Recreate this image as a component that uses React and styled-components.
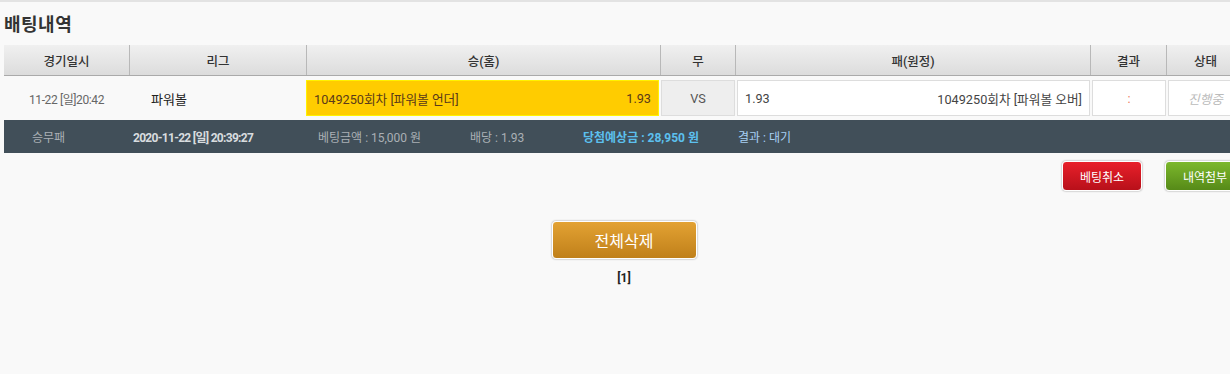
import React from "react";
import styled, { createGlobalStyle } from "styled-components";

const Global = createGlobalStyle`
  html, body { margin: 0; padding: 0; overflow: hidden; }
  body {
    background: #f9f9f9;
    font-family: Roboto, "Noto Sans CJK KR", sans-serif;
    color: #333;
  }
`;

const Page = styled.div`
  width: 1240px;
  padding: 0 0 0 4px;
  border-top: 2px solid #e3e3e3;
`;

const Title = styled.h2`
  margin: 0;
  padding: 10px 0 0;
  height: 33px;
  font-size: 18px;
  font-weight: 700;
  color: #333;
  letter-spacing: 0.5px;
  line-height: 26px;
`;

const cols = "125px 177px 354px 75px 355px 76px 78px";

const Header = styled.div`
  display: grid;
  grid-template-columns: ${cols};
  height: 30px;
  background: linear-gradient(#f0f0f0, #dcdcdc);
  border-bottom: 1px solid #aaa;
`;

const HCell = styled.div`
  display: flex;
  align-items: center;
  justify-content: center;
  font-size: 12.5px;
  font-weight: 500;
  color: #333;
  border-left: ${(p) => (p.$first ? "none" : "1px solid #b8b8b8")};
`;

const Row = styled.div`
  display: grid;
  grid-template-columns: ${cols};
  height: 44px;
  align-items: stretch;
`;

const Cell = styled.div`
  display: flex;
  align-items: center;
  justify-content: ${(p) => p.$justify || "center"};
  padding-left: ${(p) => p.$pl || 0}px;
  font-size: ${(p) => p.$fs || 12}px;
  letter-spacing: ${(p) => p.$ls || 0}px;
  color: ${(p) => p.$color || "#333"};
`;

const Box = styled.div`
  box-sizing: border-box;
  margin: 4px ${(p) => p.$mr || 0}px 4px ${(p) => p.$ml || 0}px;
  flex: 1;
  align-self: stretch;
  display: flex;
  align-items: center;
  justify-content: ${(p) => p.$justify || "space-between"};
  padding: 0 7px;
  font-size: 12.7px;
  color: ${(p) => p.$color || "#333"};
  background: ${(p) => p.$bg || "#fff"};
  border: 1px solid ${(p) => p.$border || "#ddd"};
  font-style: ${(p) => (p.$italic ? "italic" : "normal")};
`;

const InfoBar = styled.div`
  display: flex;
  align-items: center;
  height: 33px;
  padding-left: 28px;
  background: #414f59;
  font-size: 12px;
`;

const Info = styled.span`
  flex-shrink: 0;
  width: ${(p) => (p.$w ? `${p.$w}px` : "auto")};
  color: ${(p) => p.$color || "#aab0b5"};
  font-weight: ${(p) => (p.$bold ? 700 : 400)};
  letter-spacing: ${(p) => p.$ls || 0}px;
`;

const Actions = styled.div`
  display: flex;
  justify-content: flex-end;
  gap: 23px;
  padding: 8px 0 0;
  margin-right: -1px;
`;

const Btn = styled.button`
  box-sizing: border-box;
  width: ${(p) => p.$w || 80}px;
  height: ${(p) => p.$h || 30}px;
  border: 1px solid #fff;
  border-radius: 4px;
  box-shadow: 0 0 2px rgba(0, 0, 0, 0.45);
  background: ${(p) => p.$bg};
  color: #fff;
  font-family: Roboto, "Noto Sans CJK KR", sans-serif;
  font-size: ${(p) => p.$fs || 12}px;
  cursor: pointer;
  padding: 0;
`;

const Center = styled.div`
  display: flex;
  flex-direction: column;
  align-items: center;
  width: 1248px;
  margin-left: -4px;
  padding-top: 30px;
`;

const Pager = styled.div`
  margin-top: 12px;
  font-size: 12px;
  font-weight: 700;
  color: #222;
`;

export default function App() {
  const heads = ["경기일시", "리그", "승(홈)", "무", "패(원정)", "결과", "상태"];
  return (
    <>
      <Global />
      <Page>
        <Title>배팅내역</Title>
        <Header>
          {heads.map((h, i) => (
            <HCell key={h} $first={i === 0}>
              {h}
            </HCell>
          ))}
        </Header>
        <Row>
          <Cell $color="#666" $ls={-0.4}>
            11-22 [일]20:42
          </Cell>
          <Cell $justify="flex-start" $pl={22} $color="#222" $fs={13}>
            파워볼
          </Cell>
          <Cell>
            <Box $bg="#ffcc00" $border="#fff200" $mr={1} $color="#5a3a1a">
              <span>1049250회차 [파워볼 언더]</span>
              <span>1.93</span>
            </Box>
          </Cell>
          <Cell>
            <Box $bg="#eeeeee" $ml={1} $justify="center" $color="#555">
              VS
            </Box>
          </Cell>
          <Cell>
            <Box $ml={2} $color="#444">
              <span>1.93</span>
              <span>1049250회차 [파워볼 오버]</span>
            </Box>
          </Cell>
          <Cell>
            <Box $ml={2} $justify="center" $color="#f08060">
              :
            </Box>
          </Cell>
          <Cell>
            <Box $ml={2} $justify="flex-start" $color="#bbb" $italic>
              <span style={{ paddingLeft: 12 }}>진행중</span>
            </Box>
          </Cell>
        </Row>
        <InfoBar>
          <Info $w={101}>승무패</Info>
          <Info $w={185} $bold $color="#d8dcdf" $ls={-0.7}>
            2020-11-22 [일] 20:39:27
          </Info>
          <Info $w={152}>베팅금액 : 15,000 원</Info>
          <Info $w={113}>배당 : 1.93</Info>
          <Info $w={155} $bold $color="#5cc0ee">
            당첨예상금 : 28,950 원
          </Info>
          <Info $color="#a8d0f4">결과 : 대기</Info>
        </InfoBar>
        <Actions>
          <Btn $bg="linear-gradient(#e8202a, #b8101a)">베팅취소</Btn>
          <Btn $bg="linear-gradient(#7cb82c, #568a18)">내역첨부</Btn>
        </Actions>
        <Center>
          <Btn $w={145} $h={38} $fs={16} $bg="linear-gradient(#e3a233, #c0801a)">
            전체삭제
          </Btn>
          <Pager>[1]</Pager>
        </Center>
      </Page>
    </>
  );
}
